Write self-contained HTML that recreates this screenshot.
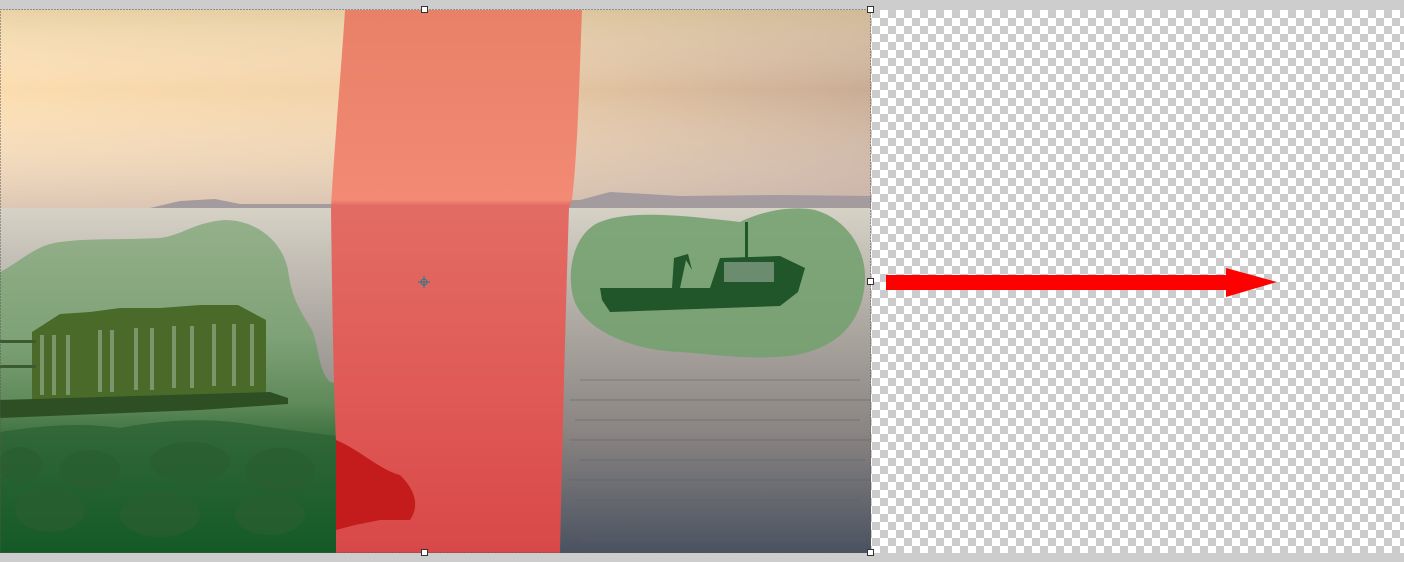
<!DOCTYPE html>
<html><head><meta charset="utf-8"><style>
html,body{margin:0;padding:0;width:1404px;height:562px;overflow:hidden;background:#cdcdcd}
svg{display:block}
</style></head><body>
<svg width="1404" height="562" viewBox="0 0 1404 562" xmlns="http://www.w3.org/2000/svg">
<defs>
<pattern id="chk" x="872" y="10" width="16" height="16" patternUnits="userSpaceOnUse">
<rect width="16" height="16" fill="#fff"/><rect width="8" height="8" fill="#cccccc"/><rect x="8" y="8" width="8" height="8" fill="#cccccc"/>
</pattern>
<linearGradient id="skyH" x1="0" x2="1" y1="0" y2="0">
<stop offset="0" stop-color="#fbdcae"/><stop offset="0.45" stop-color="#f2d2a8"/><stop offset="1" stop-color="#c9ac94"/>
</linearGradient>
<linearGradient id="skyV" x1="0" x2="0" y1="0" y2="1">
<stop offset="0" stop-color="#d8c89a" stop-opacity="0.5"/><stop offset="0.4" stop-color="#fff" stop-opacity="0"/><stop offset="1" stop-color="#c8b8b8" stop-opacity="0.6"/>
</linearGradient>
<linearGradient id="sea" x1="0" x2="0" y1="0" y2="1">
<stop offset="0" stop-color="#d6d2c6"/><stop offset="0.3" stop-color="#b2aca6"/><stop offset="0.65" stop-color="#8a8482"/><stop offset="1" stop-color="#4a5260"/>
</linearGradient>
<linearGradient id="red" x1="0" x2="0" y1="0" y2="1">
<stop offset="0" stop-color="#e98068"/><stop offset="0.35" stop-color="#f28a74"/><stop offset="0.36" stop-color="#e26c64"/><stop offset="0.7" stop-color="#e05a56"/><stop offset="1" stop-color="#d84848"/>
</linearGradient>
<linearGradient id="grn" x1="0" x2="0" y1="0" y2="1">
<stop offset="0" stop-color="#94b08a"/><stop offset="0.35" stop-color="#7fa278"/><stop offset="0.55" stop-color="#5f8a5a"/><stop offset="0.7" stop-color="#2e6634"/><stop offset="1" stop-color="#145a26"/>
</linearGradient>
<linearGradient id="rock" x1="0" x2="0" y1="0" y2="1">
<stop offset="0" stop-color="#34683a"/><stop offset="1" stop-color="#145a26"/>
</linearGradient>
</defs>
<rect x="871" y="10" width="533" height="543" fill="url(#chk)"/>
<rect x="0" y="10" width="871" height="199" fill="url(#skyH)"/>
<rect x="0" y="10" width="871" height="199" fill="url(#skyV)"/>
<path d="M150 208 L180 201 L215 199 L240 204 L330 204 L580 200 L610 192 L680 196 L780 195 L871 196 L871 210 L150 210Z" fill="#a39b9e"/>
<rect x="0" y="208" width="871" height="345" fill="url(#sea)"/>
<g stroke="#5a6070" stroke-width="1.5" opacity="0.35">
<path d="M580 380 H860 M570 400 H870 M575 420 H860 M570 440 H870 M580 460 H865 M570 480 H870 M575 500 H860 M570 520 H870 M580 540 H866"/>
</g>
<path d="M0 272 C20 262 35 245 60 242 C90 238 120 240 160 238 C180 236 195 222 225 220 C255 220 282 240 288 270 C292 300 300 310 312 330 C320 350 318 370 330 382 L336 383 L336 553 L0 553Z" fill="url(#grn)"/>
<path d="M0 432 C40 426 80 422 120 428 C170 418 220 418 260 426 L336 436 L336 553 L0 553Z" fill="url(#rock)"/>
<g fill="#2a5e30" opacity="0.7">
<ellipse cx="20" cy="465" rx="22" ry="18"/><ellipse cx="90" cy="470" rx="30" ry="20"/><ellipse cx="190" cy="462" rx="40" ry="20"/><ellipse cx="280" cy="470" rx="35" ry="22"/><ellipse cx="50" cy="510" rx="35" ry="22"/><ellipse cx="160" cy="515" rx="40" ry="22"/><ellipse cx="270" cy="515" rx="35" ry="20"/>
</g>
<path d="M32 332 L60 314 L90 312 L120 308 L160 308 L200 305 L238 305 L266 320 L266 395 L32 400Z" fill="#4a6a2a"/>
<g fill="#86a07a" opacity="0.8">
<rect x="40" y="335" width="4" height="60"/><rect x="52" y="335" width="4" height="60"/><rect x="66" y="335" width="4" height="60"/><rect x="98" y="330" width="4" height="62"/><rect x="110" y="330" width="4" height="62"/><rect x="134" y="328" width="4" height="62"/><rect x="150" y="328" width="4" height="62"/><rect x="172" y="326" width="4" height="62"/><rect x="190" y="326" width="4" height="62"/><rect x="212" y="324" width="4" height="62"/><rect x="232" y="324" width="4" height="62"/><rect x="250" y="324" width="4" height="62"/>
</g>
<path d="M0 400 L270 392 L288 398 L288 404 L200 410 L0 418Z" fill="#2e4e24"/>
<rect x="0" y="340" width="36" height="3" fill="#3c5a30"/><rect x="0" y="365" width="36" height="3" fill="#3c5a30"/>
<path d="M345 10 L582 10 C580 60 578 150 572 200 L569 208 C566 300 562 450 560 553 L336 553 L336 440 C334 400 332 300 331 208 C334 150 342 60 345 10Z" fill="url(#red)"/>
<path d="M336 440 C360 450 380 470 400 475 C415 490 420 505 410 520 L380 520 L355 525 L336 530Z" fill="#c41c1c"/>
<path d="M600 222 C630 210 680 215 740 222 C760 212 790 205 815 210 C850 220 870 255 864 290 C858 330 830 350 790 356 C750 360 720 355 680 352 C630 350 585 330 574 300 C565 270 575 232 600 222Z" fill="#73a06e" opacity="0.88"/>
<path d="M600 288 L710 288 L720 258 L780 256 L805 268 L798 292 L780 306 L610 312 L602 300Z" fill="#20562a"/>
<rect x="724" y="262" width="50" height="20" fill="#6c8c70"/>
<rect x="745" y="222" width="3" height="40" fill="#20562a"/>
<path d="M672 288 L674 258 L688 254 L692 270 L686 260 L680 288Z" fill="#20562a"/>
<circle cx="424" cy="282" r="3" fill="none" stroke="#2a7a8a" stroke-width="1"/>
<path d="M418 282 H430 M424 276 V288" stroke="#2a7a8a" stroke-width="1"/>
<rect x="0.5" y="9.5" width="870" height="543" fill="none" stroke="#555" stroke-width="1" stroke-dasharray="1,2"/>
<g fill="#fff" stroke="#333" stroke-width="1">
<rect x="421.5" y="6.5" width="6" height="6"/><rect x="867.5" y="6.5" width="6" height="6"/><rect x="867.5" y="278.5" width="6" height="6"/><rect x="867.5" y="549.5" width="6" height="6"/><rect x="421.5" y="549.5" width="6" height="6"/>
</g>
<path d="M886 275 L1226 275 L1226 268 L1277 282 L1226 297 L1226 290 L886 290Z" fill="#ff0000"/>
</svg>
</body></html>
